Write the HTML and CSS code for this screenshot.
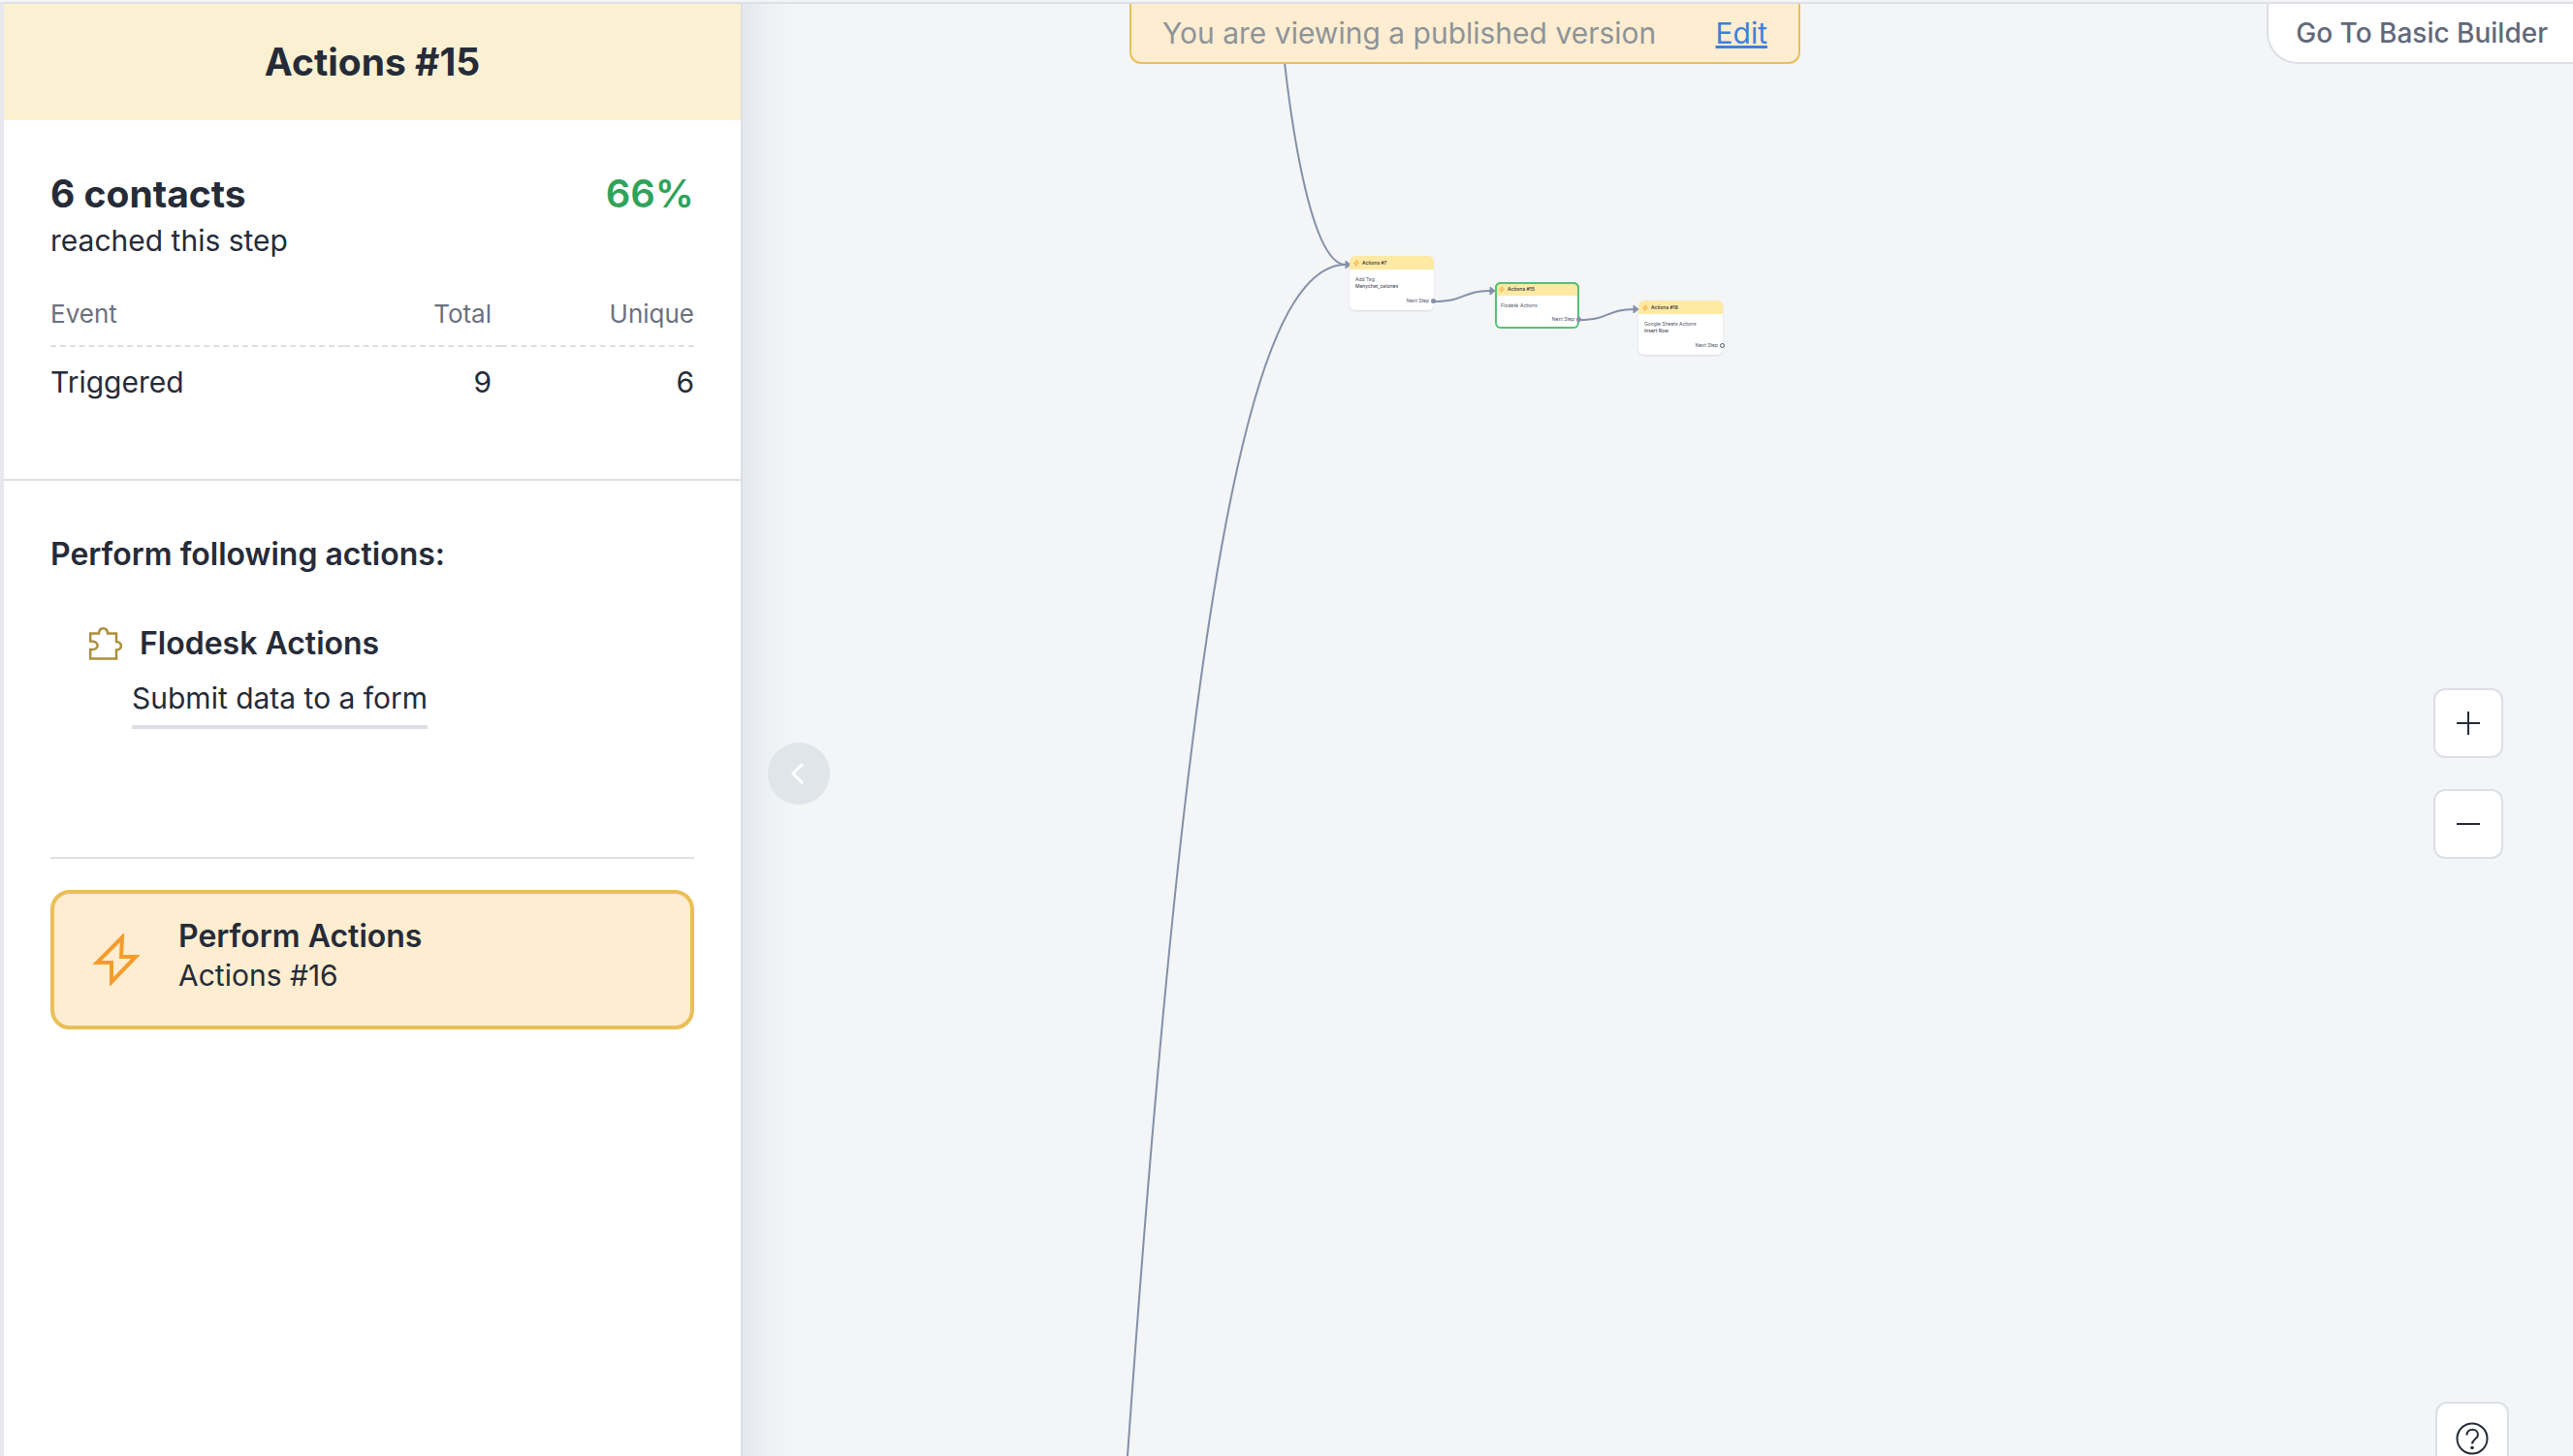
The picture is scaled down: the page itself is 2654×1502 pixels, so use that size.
FILE: index.html
```html
<!DOCTYPE html>
<html lang="en">
<head>
<meta charset="utf-8">
<title>Flow Builder</title>
<meta name="viewport" content="width=device-width, initial-scale=1">
<link rel="stylesheet" href="styles.css">
</head>
<body>
<div class="app">
  <aside class="panel">
    <header class="panel-head"><h1>Actions #15</h1></header>
    <section class="stats">
      <div class="reach">
        <p class="reach-count">6 contacts</p>
        <p class="reach-rate">66%</p>
      </div>
      <p class="reach-note">reached this step</p>
      <table class="events">
        <thead><tr><th class="col-event" scope="col">Event</th><th class="col-total" scope="col">Total</th><th class="col-unique" scope="col">Unique</th></tr></thead>
        <tbody><tr><td>Triggered</td><td>9</td><td>6</td></tr></tbody>
      </table>
    </section>
    <section class="actions">
      <h2>Perform following actions:</h2>
      <div class="action">
        <h3 class="action-title">
          <svg class="puzzle" viewBox="0 0 34 34" aria-hidden="true"><path d="M1.200 6.500h8.800c.5-7 8.500-7 9 0h9v8.500c6.500 0 6.500 8.500 0 8.500v9H1.200v-9.500c10 1 10-9 0-8.500z"/></svg>
          Flodesk Actions
        </h3>
        <a class="action-link" href="#form">Submit data to a form</a>
      </div>
      <hr class="rule">
      <button class="next-step" type="button">
        <svg class="bolt" viewBox="0 0 48 54" aria-hidden="true"><path d="M30 4 4 30h15v20L44 24H29z"/></svg>
        <span class="next-text"><strong>Perform Actions</strong><span>Actions #16</span></span>
      </button>
    </section>
  </aside>

  <main class="canvas">
    <svg class="wires" aria-hidden="true">
      <path d="M553 0C566 150 590 269 622 269"/>
      <path d="M397 1498C458 640 519 269 622 269"/>
      <path d="M713 307C746 307 741 296 772 296"/>
      <path d="M863 326C895 326 890 315 920 315"/>
      <path class="tip" d="M622 265l5 4-5 4zM771 292l5 4-5 4zM919 311l5 4-5 4z"/>
    </svg>

    <article class="node node-7">
      <h4><svg class="spark" viewBox="0 0 48 54" aria-hidden="true"><path d="M30 4 4 30h15v20L44 24H29z"/></svg>Actions #7</h4>
      <p>Add Tag</p><p class="detail">Manychat_calories</p>
      <p class="port">Next Step</p>
    </article>
    <article class="node node-15 selected">
      <h4><svg class="spark" viewBox="0 0 48 54" aria-hidden="true"><path d="M30 4 4 30h15v20L44 24H29z"/></svg>Actions #15</h4>
      <p>Flodesk Actions</p>
      <p class="port">Next Step</p>
    </article>
    <article class="node node-16">
      <h4><svg class="spark" viewBox="0 0 48 54" aria-hidden="true"><path d="M30 4 4 30h15v20L44 24H29z"/></svg>Actions #16</h4>
      <p>Google Sheets Actions</p><p class="detail">Insert Row</p>
      <p class="port open">Next Step</p>
    </article>

    <div class="banner"><span>You are viewing a published version</span><a href="#edit">Edit</a></div>
    <button class="basic" type="button">Go To Basic Builder</button>
    <button class="collapse" type="button" aria-label="Collapse panel"><svg viewBox="0 0 64 64"><path d="M36 22 26 32l10 10"/></svg></button>
    <div class="zoom">
      <button type="button" aria-label="Zoom in"><svg viewBox="0 0 24 24"><path d="M0 12h24M12 0v24"/></svg></button>
      <button type="button" aria-label="Zoom out"><svg viewBox="0 0 24 24"><path d="M0 12h24"/></svg></button>
    </div>
    <button class="help" type="button" aria-label="Help"><svg viewBox="0 0 34 34"><circle cx="17" cy="17" r="15.500"/><path d="M11.500 13.500c0-8 11.500-7.500 11.500-.5 0 4.500-6 4.500-6 9.500"/><circle class="dot" cx="17" cy="26.500" r="1.800"/></svg></button>
  </main>
</div>
</body>
</html>
```
FILE: styles.css
```css
* { box-sizing: border-box; }
body {
  margin: 0;
  font-family: Inter, "Liberation Sans", sans-serif;
  color: #262b38;
  background: #f3f5f7;
}
h1, h2, h3, h4, p { margin: 0; }
button { font: inherit; color: inherit; margin: 0; padding: 0; cursor: pointer; }
svg { fill: none; stroke: currentColor; display: block; }

.app {
  display: flex;
  height: 100vh;
  overflow: hidden;
  padding-top: 2px;
}

/* Side panel */
.panel {
  flex: none;
  width: 766px;
  border: solid #dcdfe4;
  border-width: 2px 2px 0 4px;
  border-left-color: #e6e8ee;
  background: #fff;
}
.panel-head {
  height: 120px;
  display: grid;
  place-items: center;
  background: #fcf0d3;
}
.panel-head h1 { font-size: 39px; line-height: 48px; font-weight: 700; }

.stats { padding: 52px 48px 0; height: 372px; border-bottom: 2px solid #dcdfe4; }
.reach { display: flex; justify-content: space-between; font-size: 39px; line-height: 48px; font-weight: 700; }
.reach-rate { color: #2fa35b; font-size: 40px; font-weight: 600; }
.reach-note { font-size: 30px; line-height: 48px; }
.events { width: 100%; margin-top: 26px; border-collapse: separate; border-spacing: 0; table-layout: fixed; font-size: 30px; line-height: 40px; }
.events th { padding: 5px 0 11px; height: 60px; font-size: 26px; line-height: 40px; font-weight: 400; color: #6b7180; border-bottom: 2px dashed #dcdfe4; }
.events td { padding: 16px 0 0; }
.events th, .events td { text-align: right; }
.events th:first-child, .events td:first-child { text-align: left; }
.events th:nth-child(2), .events td:nth-child(2) { padding-right: 10px; }
.col-event { width: 303px; }
.col-total { width: 162px; }

.actions { padding: 52px 48px 0; }
.actions h2 { font-size: 32px; line-height: 48px; font-weight: 600; }
.action { padding: 44px 40px 0; }
.action-title { display: flex; align-items: center; gap: 18px; font-size: 32px; line-height: 48px; font-weight: 600; }
.puzzle { width: 34px; height: 34px; color: #ad8e3c; stroke-width: 2.500; }
.action-link {
  display: inline-block;
  margin: 8px 0 0 44px;
  padding-bottom: 4px;
  border-bottom: 4px solid #dcdfe4;
  color: inherit;
  font-size: 30px;
  line-height: 48px;
  text-decoration: none;
}
.rule { margin: 132px 0 32px; border: 0; border-top: 2px solid #dcdfe4; }
.next-step {
  display: flex;
  align-items: center;
  gap: 40px;
  width: 100%;
  height: 144px;
  padding: 0 40px;
  border: 4px solid #ebbf58;
  border-radius: 20px;
  background: #feedd0;
  text-align: left;
}
.bolt { width: 48px; height: 54px; color: #f39c2d; stroke-width: 4; }
.next-text { display: flex; flex-direction: column; font-size: 30px; line-height: 40px; padding-bottom: 8px; }
.next-text strong { font-size: 32px; font-weight: 600; }

/* Canvas */
.canvas {
  position: relative;
  flex: 1;
  min-width: 0;
  border-top: 2px solid #dcdfe4;
  background: linear-gradient(to right, #e4e8ef, #edf0f4 24px, #f3f5f7 56px);
  overflow: hidden;
}
.wires { position: absolute; inset: 0; width: 100%; height: 100%; color: #8590a8; stroke-width: 2; }
.wires .tip { fill: currentColor; stroke-width: 1; }

.node {
  position: absolute;
  width: 87px;
  height: 56px;
  border-radius: 6px;
  background: #fff;
  box-shadow: 0 1px 2px rgba(60, 70, 90, .15);
  font-size: 5px;
  line-height: 7px;
  color: #4d5363;
}
.node h4 {
  display: flex;
  align-items: center;
  gap: 3px;
  height: 14px;
  margin-bottom: 7px;
  padding-left: 4px;
  border-radius: 6px 6px 0 0;
  background: #ffe9a3;
  font-size: 5px;
  font-weight: 500;
  color: #262b38;
}
.node p { padding-left: 6px; }
.node .detail { color: #262b38; }
.spark { width: 6px; height: 7px; color: #f39c2d; stroke-width: 6; }
.node .port { position: absolute; right: 5px; bottom: 6px; }
.port::after {
  content: "";
  box-sizing: border-box;
  position: absolute;
  right: -7px;
  top: 1px;
  width: 5px;
  height: 5px;
  border-radius: 50%;
  background: #8590a8;
}
.port.open::after { background: #fff; border: 1px solid #4d5363; }
.selected { height: 48px; box-shadow: inset 0 0 0 2px #56c177; }
.selected h4 { box-shadow: inset 0 2px #56c177, inset 2px 0 #56c177, inset -2px 0 #56c177; }
.node-7 { left: 626px; top: 260px; }
.node-15 { left: 776px; top: 287px; }
.node-16 { left: 924px; top: 306px; }

.banner {
  position: absolute;
  top: 0;
  left: 399px;
  display: flex;
  justify-content: space-between;
  width: 692px;
  height: 62px;
  padding: 6px 32px 0;
  border: solid #ebbf58;
  border-width: 0 2px 2px;
  border-radius: 0 0 12px 12px;
  background: #feedd0;
  font-size: 30px;
  line-height: 48px;
  color: #8d9499;
}
.banner a { color: #3f80db; text-decoration-thickness: 3px; }
.basic {
  position: absolute;
  top: 0;
  right: 0;
  height: 62px;
  padding: 0 26px 0 28px;
  border: solid #dcdfe4;
  border-width: 0 0 2px 2px;
  border-radius: 0 0 0 32px;
  background: #fff;
  font-size: 28px;
  font-weight: 500;
  color: #626979;
}
.collapse {
  position: absolute;
  left: 26px;
  top: 762px;
  width: 64px;
  height: 64px;
  border: 0;
  border-radius: 50%;
  background: #e0e5ea;
  color: #fff;
}
.collapse svg { stroke-width: 3; }
.zoom { position: absolute; right: 72px; top: 706px; display: grid; gap: 32px; }
.zoom button, .help {
  display: grid;
  place-items: center;
  width: 72px;
  height: 72px;
  border: 2px solid #dcdfe4;
  border-radius: 12px;
  background: #fff;
}
.zoom svg { width: 24px; height: 24px; stroke-width: 2; }
.help { position: absolute; right: 66px; bottom: -20px; width: 76px; height: 76px; }
.help svg { width: 34px; height: 34px; stroke-width: 2; }
.help .dot { fill: currentColor; stroke: none; }
```
